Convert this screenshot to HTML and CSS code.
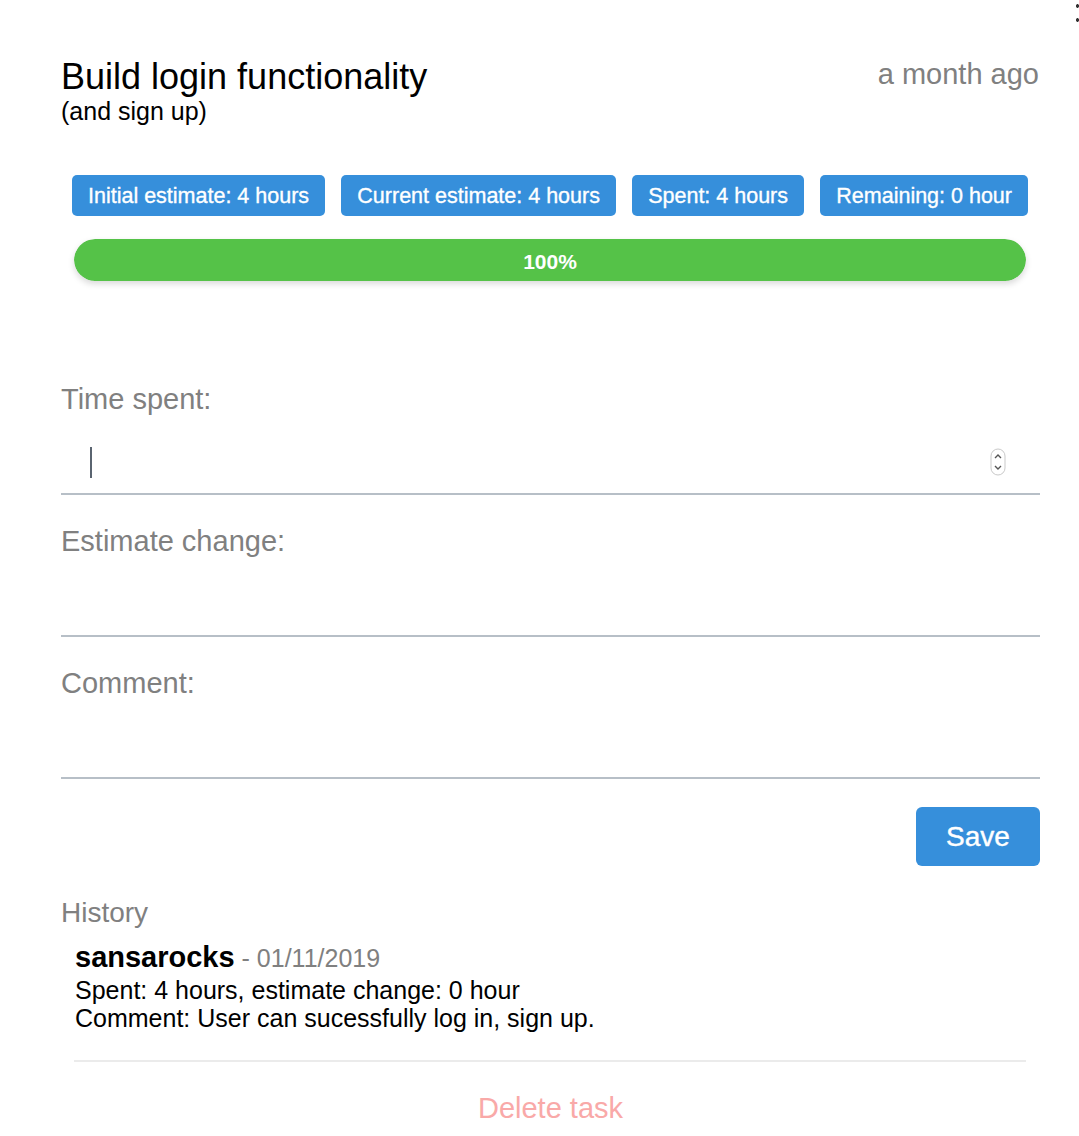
FILE: index.html
```html
<!DOCTYPE html>
<html>
<head>
<meta charset="utf-8">
<link rel="stylesheet" href="styles.css">
</head>
<body>
<div class="edge-mark"></div>
<div class="page">
  <header class="header">
    <div class="title-block">
      <h1 class="title">Build login functionality</h1>
      <div class="subtitle">(and sign up)</div>
    </div>
    <div class="date">a month ago</div>
  </header>

  <section class="stats">
    <div class="badges">
      <span class="badge">Initial estimate: 4 hours</span>
      <span class="badge">Current estimate: 4 hours</span>
      <span class="badge">Spent: 4 hours</span>
      <span class="badge">Remaining: 0 hour</span>
    </div>
    <div class="progress">
      <div class="progress-fill" style="width:100%">100%</div>
    </div>
  </section>

  <form class="form">
    <div class="field">
      <label class="label">Time spent:</label>
      <div class="input input-number">
        <span class="caret"></span>
        <svg class="spinner" width="16" height="28" viewBox="0 0 16 28">
          <rect x="1" y="1" width="14" height="26" rx="7" fill="#fff" stroke="#c9c9c9" stroke-width="1"/>
          <path d="M5 10 L8 7 L11 10" fill="none" stroke="#555" stroke-width="1.4"/>
          <path d="M5 18 L8 21 L11 18" fill="none" stroke="#555" stroke-width="1.4"/>
        </svg>
      </div>
    </div>
    <div class="field">
      <label class="label">Estimate change:</label>
      <div class="input"></div>
    </div>
    <div class="field">
      <label class="label">Comment:</label>
      <div class="input"></div>
    </div>
    <div class="actions">
      <button type="button" class="save">Save</button>
    </div>
  </form>

  <section class="history">
    <h2 class="history-title">History</h2>
    <div class="entry">
      <div class="entry-head"><span class="user">sansarocks</span><span class="entry-date"> - 01/11/2019</span></div>
      <div class="entry-line">Spent: 4 hours, estimate change: 0 hour</div>
      <div class="entry-line">Comment: User can sucessfully log in, sign up.</div>
    </div>
  </section>

  <div class="delete">Delete task</div>
</div>
</body>
</html>
```
FILE: styles.css
```css
* { box-sizing: border-box; }
html, body { margin: 0; padding: 0; background: #fff; }
body {
  font-family: "Liberation Sans", Arial, Helvetica, sans-serif;
  color: #000;
  width: 1079px;
  height: 1136px;
  overflow: hidden;
  position: relative;
}
.edge-mark {
  position: absolute;
  right: 0;
  top: 3px;
  width: 3px;
  height: 20px;
  background: radial-gradient(circle at 50% 3px, #333 1.5px, transparent 2px), radial-gradient(circle at 50% 17px, #333 1.5px, transparent 2px);
}
.page {
  padding: 56px 39px 0 61px;
}
.header {
  display: flex;
  justify-content: space-between;
  align-items: flex-start;
}
.title {
  margin: 0;
  font-size: 36px;
  font-weight: normal;
  line-height: 42px;
}
.subtitle {
  font-size: 25px;
  line-height: 28px;
  margin-top: -1px;
}
.date {
  font-size: 29px;
  line-height: 36px;
  color: #808080;
  padding-right: 1px;
}
.stats {
  margin-top: 50px;
  padding: 0 12px 0 11px;
}
.badges {
  display: flex;
  justify-content: space-between;
}
.badge {
  background: #368fdb;
  color: #fff;
  font-size: 21.5px;
  height: 41px;
  line-height: 42px;
  padding: 0 16px;
  border-radius: 5px;
  white-space: nowrap;
  -webkit-text-stroke: 0.35px #fff;
}
.progress {
  margin: 23px 2px 0 2px;
  height: 42px;
  border-radius: 21px;
  background: #eee;
  box-shadow: 0 3px 6px rgba(0,0,0,0.15);
  overflow: hidden;
}
.progress-fill {
  height: 100%;
  background: #55c248;
  color: #fff;
  font-weight: bold;
  font-size: 21px;
  line-height: 46px;
  text-align: center;
  border-radius: 21px;
}
.form {
  margin-top: 102px;
}
.field {
  display: flex;
  flex-direction: column;
}
.label {
  font-size: 29px;
  line-height: 32px;
  color: #808080;
}
.input {
  height: 112px;
  border-bottom: 2px solid #b7bfc7;
  margin-top: -32px;
}
.field:first-child .input {
  margin-top: 0;
  height: 80px;
}
.input-number {
  display: flex;
  align-items: center;
  justify-content: space-between;
  padding: 16px 34px 0 29px;
}
.caret {
  width: 2px;
  height: 31px;
  background: #5a6470;
}
.field + .field { margin-top: 30px; }
.actions {
  display: flex;
  justify-content: flex-end;
  margin-top: 28px;
}
.save {
  background: #368fdb;
  color: #fff;
  border: none;
  border-radius: 6px;
  width: 124px;
  height: 59px;
  font-family: inherit;
  font-size: 28px;
  padding: 0;
  -webkit-text-stroke: 0.4px #fff;
}
.history {
  margin-top: 31px;
}
.history-title {
  margin: 0;
  font-size: 28px;
  font-weight: normal;
  color: #808080;
  line-height: 32px;
}
.entry {
  padding: 14px 14px 28px 1px;
  margin: 0 14px 0 13px;
  border-bottom: 2px solid #ebebeb;
}
.entry-head { line-height: 28px; }
.user {
  font-weight: bold;
  font-size: 29px;
}
.entry-date {
  font-size: 25px;
  color: #808080;
}
.entry-line {
  font-size: 25px;
  line-height: 28px;
}
.delete {
  text-align: center;
  color: #f9a9a8;
  font-size: 29px;
  margin-top: 30px;
  margin-left: 14px;
  margin-right: 14px;
}
```
